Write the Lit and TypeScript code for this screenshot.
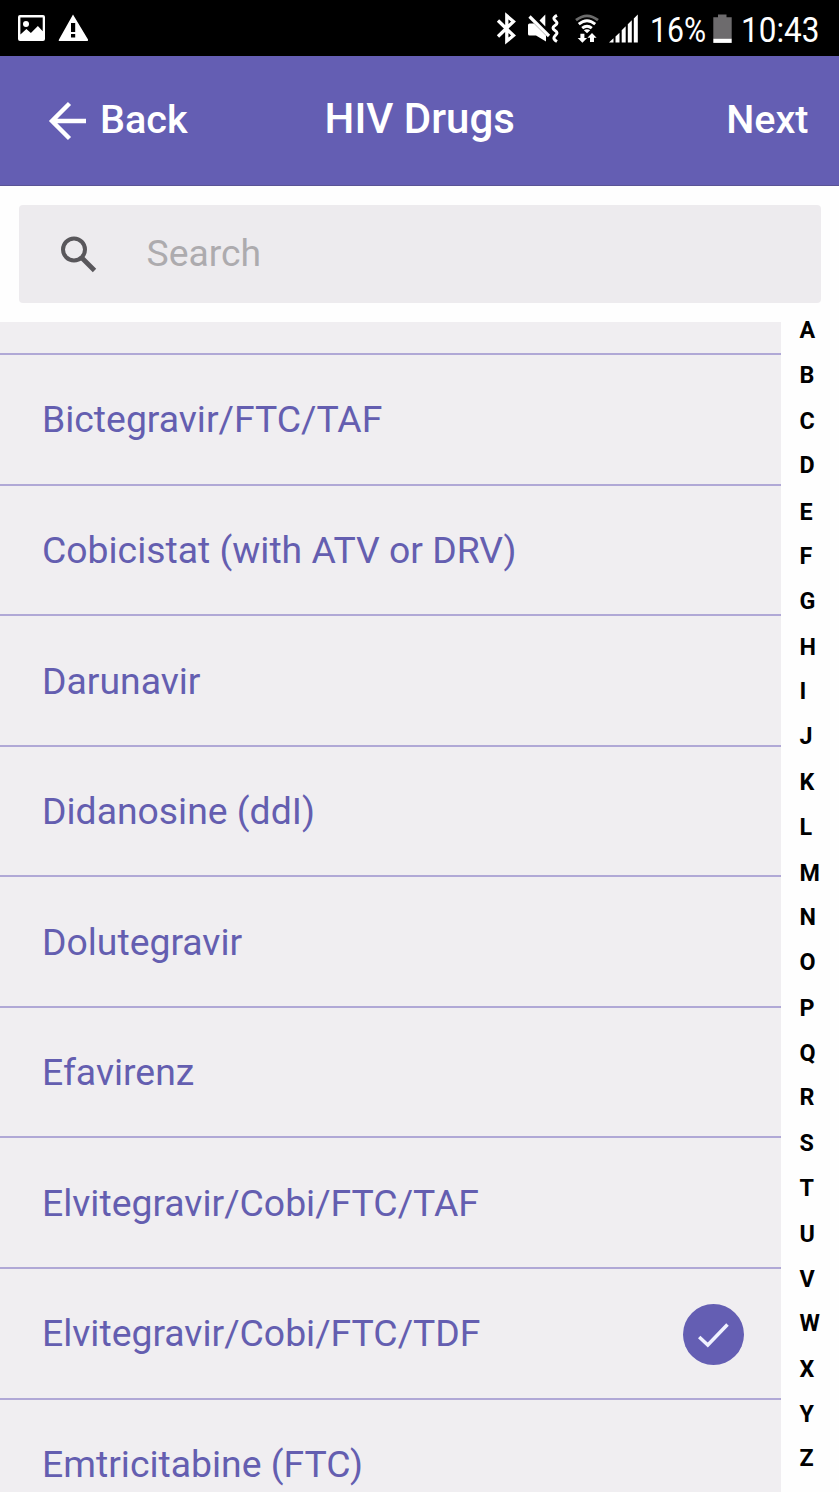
import { LitElement, html, css, svg } from "lit";
import { customElement, property, state } from "lit/decorators.js";
import { classMap } from "lit/directives/class-map.js";

@customElement("status-bar")
class StatusBar extends LitElement {
  static styles = css`
    :host { display: block; height: 56px; background: #000; }
    svg { display: block; }
    text { font-family: Roboto, "Liberation Sans", sans-serif; font-size: 35px; fill: #fff; }
  `;

  render() {
    return html`<svg width="839" height="56" viewBox="0 0 839 56" fill="#fff">
      ${svg`
      <path fill-rule="evenodd" d="M20 15h23a2 2 0 0 1 2 2v22a2 2 0 0 1-2 2H20a2 2 0 0 1-2-2V17a2 2 0 0 1 2-2zM20.400 17.600V34.500l6-5.500 4.500 4 7-7 4.800 5.200V17.600z"/>
      <circle cx="26" cy="24" r="3"/>
      <path fill-rule="evenodd" d="M73 14.500L88 39.500Q88.500 41 87 41H60Q58 41 59 39.500zM71 23v9h4.200v-9zM71 34v3.600h4.200V34z"/>
      <path d="M498 20.500L513.500 35.500L506.800 41V15.800L513.500 21.500L498 36.500" fill="none" stroke="#fff" stroke-width="3.300"/>
      <path d="M528 25q0-1.500 1.500-1.500H534L546 35.500V41.500L536 35.500H529.500Q528 35.500 528 34zM539.500 20.500l5.800-6v12z"/>
      <path d="M529.500 16.500l19.500 19.500" stroke="#fff" stroke-width="3.200"/>
      <path d="M557 15.300C550 19 557 20.500 557 23S553 25.500 553 28 557 30.500 557 33 550 37.500 557 41.500" fill="none" stroke="#fff" stroke-width="3"/>
      <path d="M576 20.200Q587 11.500 598 20.200" fill="none" stroke="#6b6b6b" stroke-width="2.800"/>
      <path d="M578.800 24.200q8.200-6.800 16.400 0M582.200 28.200q4.800-4 9.600 0" fill="none" stroke="#fff" stroke-width="2.900"/>
      <path d="M583.800 30.300q3.200-2 6.400 0l-3.200 3z"/>
      <path d="M580.400 33.800h4v4.200h2.700l-4.700 4.800-4.700-4.800h2.700zM590 42v-4.200h-2.600l4.600-4.800 4.600 4.800H594V42z"/>
      <path d="M609 42.500l4.500-4.300v4.300zM615.500 36.500l4-3.800v9.800h-4zM621.700 30.300l4-4v16.200h-4zM627.800 24.200l4-4v22.300h-4zM633.800 18.500l4-4v28h-4z"/>
      <text x="650" y="42" textLength="56" lengthAdjust="spacingAndGlyphs">16%</text>
      <path d="M713.300 17.200h4.700V14.500h8.500v2.700h5.200V39h-18.400z" fill="#6d6b6d"/>
      <path d="M713.300 38.800h18.400v4.100h-18.400z"/>
      <text x="741" y="42" textLength="78.500" lengthAdjust="spacingAndGlyphs">10:43</text>
      `}
    </svg>`;
  }
}

@customElement("nav-bar")
class NavBar extends LitElement {
  static styles = css`
    :host {
      display: grid; grid-template-columns: 1fr auto 1fr; align-items: center;
      box-sizing: border-box; height: 130px; padding: 0 30.500px 4px 46px;
      background: #645eb3; border-bottom: 1px solid #5a5495; color: #fff;
      font: 500 39.6px/46px Roboto, "Liberation Sans", sans-serif;
    }
    .back { display: flex; align-items: center; gap: 12px; }
    .back svg { margin-top: 5px; }
    .back span, .next { padding-top: 2px; }
    .title { font-size: 42px; transform: translateX(-7.500px); }
    .next { text-align: right; }
  `;

  render() {
    return html`
      <div class="back">
        <svg width="42" height="42" viewBox="0 0 42 42" fill="none" stroke="#fff" stroke-width="4.400">
          <path d="M40 21H6M23.500 3.500L6 21l17.500 17.500" />
        </svg>
        <span>Back</span>
      </div>
      <div class="title">HIV Drugs</div>
      <div class="next">Next</div>
    `;
  }
}

@customElement("drug-row")
class DrugRow extends LitElement {
  @property() name = "";
  @property({ type: Boolean }) selected = false;

  static styles = css`
    :host {
      display: flex; align-items: center; justify-content: space-between;
      box-sizing: border-box; height: 130.560px; flex: none;
      padding: 0 37.500px 0 42px; border-bottom: 2px solid #b0a8d6;
      color: #645eb0; font: 400 37.350px/44px Roboto, "Liberation Sans", sans-serif;
    }
    svg { display: block; margin-top: 2px; }
  `;

  render() {
    return html`<span>${this.name}</span>
      ${this.selected
        ? html`<svg width="61" height="61" viewBox="0 0 61 61">
            <circle cx="30.500" cy="30.500" r="30.500" fill="#645eb3" />
            <path d="M16.200 33L24.800 41L44.500 20.500" fill="none" stroke="#f0f2ff" stroke-width="3.500" />
          </svg>`
        : null}`;
  }
}

@customElement("app-root")
class AppRoot extends LitElement {
  @state() private drugs = [
    "Bictegravir/FTC/TAF",
    "Cobicistat (with ATV or DRV)",
    "Darunavir",
    "Didanosine (ddI)",
    "Dolutegravir",
    "Efavirenz",
    "Elvitegravir/Cobi/FTC/TAF",
    "Elvitegravir/Cobi/FTC/TDF",
    "Emtricitabine (FTC)",
  ];
  @state() private selected = "Elvitegravir/Cobi/FTC/TDF";

  static styles = css`
    :host {
      display: flex; flex-direction: column; height: 1492px; overflow: hidden;
      background: #fefefe; font-family: Roboto, "Liberation Sans", sans-serif;
    }
    .search {
      display: flex; align-items: center; gap: 50px; flex: none; box-sizing: border-box;
      height: 98px; margin: 19px 18.500px; padding: 0 41.500px; border-radius: 4px;
      background: #edebee; color: #adabae; font-size: 37.300px; line-height: 44px;
    }
    .search span { padding-bottom: 3px; margin-left: -0.500px; }
    .body { display: flex; flex: 1; min-height: 0; }
    .list {
      display: flex; flex-direction: column; width: 781px; overflow: hidden; background: #f0eef1;
    }
    .above { flex: none; height: 31.200px; border-bottom: 2px solid #b0a8d6; }
    .index {
      display: flex; flex-direction: column; padding-left: 18.500px; margin-top: -5.700px;
      color: #000; font-size: 23.300px; font-weight: 700; line-height: 28px;
    }
    .letter { flex: none; height: 44.280px; }
    .letter.wide { height: 46.600px; }
  `;

  render() {
    return html`
      <status-bar></status-bar>
      <nav-bar></nav-bar>
      <div class="search">
        <svg width="37" height="37" viewBox="0 0 37 37" fill="none" stroke="#59575b" stroke-width="4">
          <circle cx="14" cy="13.500" r="11" />
          <path d="M22 22L34.500 34.500" stroke-width="4.800" />
        </svg>
        <span>Search</span>
      </div>
      <div class="body">
        <div class="list">
          <div class="above"></div>
          ${this.drugs.map(
            (d) => html`<drug-row .name=${d} ?selected=${d === this.selected}></drug-row>`
          )}
        </div>
        <div class="index">
          ${[..."ABCDEFGHIJKLMNOPQRSTUVWXYZ"].map(
            (l) => html`<div class=${classMap({ letter: true, wide: "BDGJLORTW".includes(l) })}>${l}</div>`
          )}
        </div>
      </div>
    `;
  }
}
